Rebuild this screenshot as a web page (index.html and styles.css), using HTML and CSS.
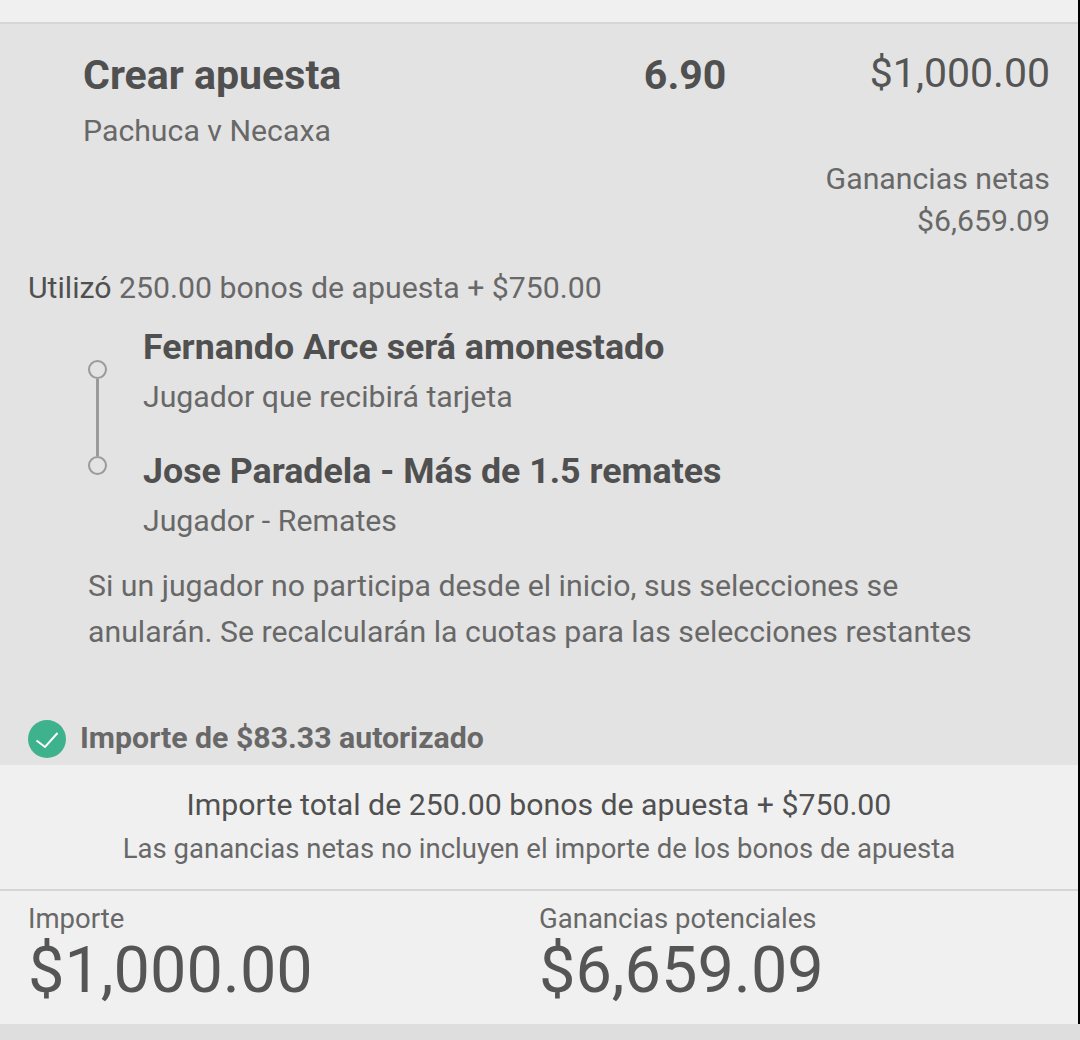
FILE: index.html
```html
<!DOCTYPE html>
<html lang="es">
<head>
<meta charset="utf-8">
<title>Crear apuesta</title>
<link rel="stylesheet" href="styles.css">
</head>
<body>
<div class="screen">
  <div class="sheet">
    <div class="topbar"></div>
    <section class="panel">
      <div class="head">
        <div class="head-left">
          <div class="title">Crear apuesta</div>
          <div class="match">Pachuca v Necaxa</div>
        </div>
        <div class="odds">6.90</div>
        <div class="stake">$1,000.00</div>
      </div>
      <div class="net">
        <div>Ganancias netas</div>
        <div>$6,659.09</div>
      </div>
      <div class="used"><span class="used-label">Utilizó</span> 250.00 bonos de apuesta + $750.00</div>
      <div class="legs">
        <div class="rail">
          <span class="dot"></span>
          <span class="line"></span>
          <span class="dot"></span>
        </div>
        <div class="leg-list">
          <div class="leg">
            <div class="leg-title">Fernando Arce será amonestado</div>
            <div class="leg-sub">Jugador que recibirá tarjeta</div>
          </div>
          <div class="leg">
            <div class="leg-title">Jose Paradela - Más de 1.5 remates</div>
            <div class="leg-sub">Jugador - Remates</div>
          </div>
        </div>
      </div>
      <p class="note">Si un jugador no participa desde el inicio, sus selecciones se anularán. Se recalcularán la cuotas para las selecciones restantes</p>
      <div class="auth">
        <svg class="check" viewBox="0 0 38 38" width="38" height="38" aria-hidden="true">
          <circle cx="19" cy="19" r="19" fill="#3eb18d"/>
          <path d="M8.5 20.5L17 27L29.5 13" fill="none" stroke="#fff" stroke-width="2"/>
        </svg>
        <span>Importe de $83.33 autorizado</span>
      </div>
    </section>
    <section class="summary">
      <div class="sum-main">Importe total de 250.00 bonos de apuesta + $750.00</div>
      <div class="sum-sub">Las ganancias netas no incluyen el importe de los bonos de apuesta</div>
    </section>
    <section class="totals">
      <div class="total">
        <div class="total-label">Importe</div>
        <div class="total-value">$1,000.00</div>
      </div>
      <div class="total">
        <div class="total-label">Ganancias potenciales</div>
        <div class="total-value">$6,659.09</div>
      </div>
    </section>
  </div>
  <div class="bottom"></div>
</div>
</body>
</html>
```
FILE: styles.css
```css
* { box-sizing: border-box; }
html, body { margin: 0; padding: 0; }
body {
  width: 1080px;
  height: 1040px;
  overflow: hidden;
  font-family: Roboto, "Liberation Sans", sans-serif;
  background: #e3e3e3;
  color: #686868;
}
.screen {
  width: 1080px;
  height: 1040px;
  display: flex;
  flex-direction: column;
}
.sheet {
  flex: none;
  display: flex;
  flex-direction: column;
  border-right: 2px solid #000;
}
.topbar {
  height: 24px;
  flex: none;
  background: #f0f0f0;
  border-bottom: 2px solid #d6d6d6;
}
.panel {
  height: 741px;
  flex: none;
  background: #e3e3e3;
  padding: 27px 28px 0;
  display: flex;
  flex-direction: column;
}
.head {
  display: flex;
  align-items: flex-start;
}
.head-left { margin-left: 55px; width: 561px; }
.title {
  font-size: 41.1px;
  font-weight: 700;
  line-height: 48px;
  color: #505050;
}
.match {
  font-size: 30.25px;
  line-height: 38px;
  margin-top: 13px;
}
.odds {
  width: 226px;
  font-size: 41px;
  font-weight: 700;
  line-height: 48px;
  color: #505050;
}
.stake {
  font-size: 41px;
  line-height: 44px;
  color: #555;
  margin-left: auto;
}
.net {
  text-align: right;
  font-size: 30.25px;
  line-height: 42px;
  margin-top: 8px;
}
.used {
  font-size: 30.25px;
  line-height: 38px;
  margin-top: 27px;
}
.used-label { color: #505050; }
.legs {
  display: flex;
  margin-top: 20px;
  margin-left: 60px;
}
.rail {
  width: 55px;
  flex: none;
  display: flex;
  flex-direction: column;
  align-items: flex-start;
  padding-top: 33px;
}
.dot {
  width: 19px;
  height: 19px;
  border: 2px solid #9a9a9a;
  border-radius: 50%;
  flex: none;
}
.line {
  width: 3px;
  height: 77px;
  margin-left: 8px;
  background: #9a9a9a;
}
.leg-list { display: flex; flex-direction: column; gap: 35px; }
.leg-title {
  font-size: 35.75px;
  font-weight: 700;
  line-height: 40px;
  color: #505050;
}
.leg-sub {
  font-size: 30.25px;
  line-height: 38px;
  margin-top: 11px;
}
.note {
  margin: 23px 0 0 60px;
  width: 920px;
  font-size: 30.25px;
  line-height: 46px;
}
.auth {
  display: flex;
  align-items: flex-start;
  gap: 14px;
  margin-top: 65px;
  font-size: 30.25px;
  line-height: 36px;
  font-weight: 700;
  color: #686868;
}
.check { flex: none; }
.summary {
  height: 124px;
  flex: none;
  background: #f0f0f0;
  text-align: center;
  padding-top: 21px;
}
.sum-main {
  font-size: 30.25px;
  line-height: 38px;
  color: #505050;
}
.sum-sub {
  font-size: 27.5px;
  line-height: 36px;
  margin-top: 7px;
}
.totals {
  height: 135px;
  flex: none;
  background: #f0f0f0;
  border-top: 2px solid #d6d6d6;
  padding: 12px 28px 0;
  display: flex;
}
.total { width: 511px; }
.total-label {
  font-size: 27.5px;
  line-height: 32px;
}
.total-value {
  font-size: 64.8px;
  line-height: 66px;
  margin-top: 2px;
  color: #555;
}
.bottom {
  flex: 1;
  background: #dedede;
}
```
